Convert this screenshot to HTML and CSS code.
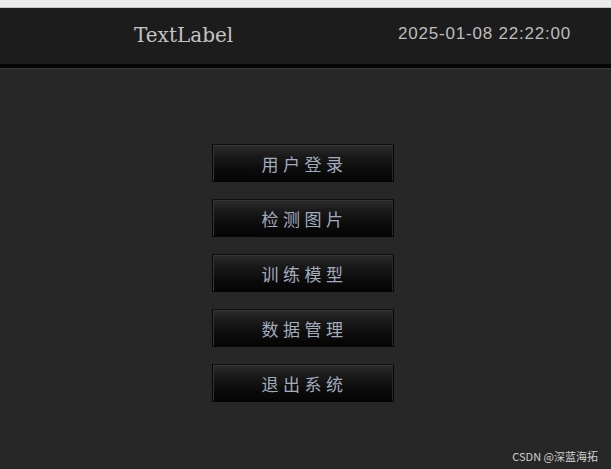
FILE: index.html
```html
<html lang="zh">
<head>
  <meta charset="UTF-8" />
  <meta name="viewport" content="width=device-width, initial-scale=1.0">
  <title>TextLabel</title>
  <link rel="stylesheet" href="styles.css">
</head>
<body>
  <div class="topbar"></div>

  <div class="header">
    <div class="title">TextLabel</div>
    <div class="clock" id="clock">2025-01-08 22:22:00</div>
  </div>
  <div class="header-line"></div>

  <div class="menu">
    <button class="menu-btn">用户登录</button>
    <button class="menu-btn">检测图片</button>
    <button class="menu-btn">训练模型</button>
    <button class="menu-btn">数据管理</button>
    <button class="menu-btn">退出系统</button>
  </div>

  <div class="watermark">CSDN @深蓝海拓</div>
</body>
</html>
```

FILE: styles.css
```css
html, body {
  margin: 0;
  height: 100%;
}
body {
  background-color: #272727;
  font-family: "Liberation Sans", Arial, sans-serif;
  position: relative;
  overflow: hidden;
}
.topbar {
  height: 7px;
  background: #ebebeb;
  border-bottom: 1px solid #c4c4c4;
}
.header {
  height: 56px;
  background: #1c1c1c;
  display: flex;
  align-items: center;
}
.title {
  font-family: "DejaVu Serif", "Liberation Serif", serif;
  font-size: 20px;
  color: #c4c4c4;
  padding-left: 134px;
  padding-bottom: 2px;
}
.clock {
  margin-left: auto;
  margin-right: 40px;
  font-size: 17px;
  letter-spacing: 0.8px;
  color: #bdbdbd;
  padding-bottom: 4px;
}
.header-line {
  height: 4px;
  background: #050505;
  border-bottom: 1px solid #3a3a3a;
}
.menu {
  display: flex;
  flex-direction: column;
  align-items: center;
  gap: 17px;
  padding-top: 75px;
  padding-right: 6px;
}
.menu-btn {
  width: 182px;
  height: 38px;
  border: 1px solid #050505;
  border-top-color: #101010;
  border-radius: 0;
  background: linear-gradient(#2c2c2c 0%, #1a1a1a 30%, #0b0b0b 70%, #050505 100%);
  box-shadow: inset 1px 1px 0 #363636, inset -1px 0 0 #2a2a2a;
  color: #a3acbd;
  font-family: "Noto Sans CJK SC", sans-serif;
  font-size: 17px;
  letter-spacing: 4.5px;
  padding: 0 0 0 4px;
  cursor: pointer;
}
.watermark {
  position: absolute;
  right: 13px;
  bottom: 5px;
  font-family: "Noto Sans CJK SC", sans-serif;
  font-size: 11px;
  color: #cfcfcf;
}
```
